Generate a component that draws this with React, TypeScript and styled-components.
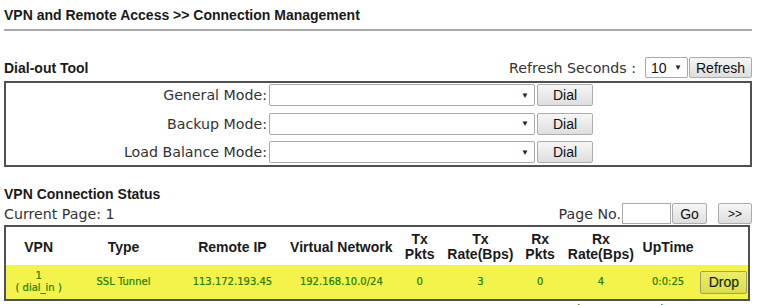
import styled, { createGlobalStyle } from 'styled-components';

const GlobalStyle = createGlobalStyle`
  body {
    margin: 0;
    background: #fff;
    font-family: "DejaVu Sans", Verdana, sans-serif;
    color: #333;
  }
`;

const Page = styled.div`
  width: 748px;
  padding: 7px 0 0 4px;
`;

const PageTitle = styled.div`
  font: bold 14px/16px "Liberation Sans", Arial, sans-serif;
  color: #1a1a1a;
`;

const Rule = styled.div`
  margin-top: 6px;
  border-top: 2px solid #a9a9a9;
`;

const Bar = styled.div<{ $top: number; $h: number }>`
  display: flex;
  align-items: center;
  justify-content: space-between;
  margin-top: ${p => p.$top}px;
  height: ${p => p.$h}px;
`;

const SectionTitle = styled.div<{ $top?: number }>`
  font: bold 14px/16px "Liberation Sans", Arial, sans-serif;
  color: #1a1a1a;
  margin-top: ${p => p.$top ?? 0}px;
`;

const Label = styled.span`
  font-size: 14.2px;
  line-height: 16px;
  color: #333;
`;

const Controls = styled.div<{ $gap: number }>`
  display: flex;
  align-items: center;
  gap: ${p => p.$gap}px;
`;

const SelectBox = styled.div<{ $w: number; $h: number }>`
  width: ${p => p.$w}px;
  height: ${p => p.$h}px;
  box-sizing: border-box;
  border: 1px solid #a9a9a9;
  border-radius: 2px;
  background: #fff;
  display: flex;
  align-items: center;
  justify-content: space-between;
  padding: 0 5px 0 5px;
  font: 14px "Liberation Sans", Arial, sans-serif;
  color: #111;
`;

const Caret = styled.span`
  font-size: 8px;
  color: #222;
`;

const Button = styled.button<{ $w: number; $h: number; $tint?: boolean }>`
  width: ${p => p.$w}px;
  height: ${p => p.$h}px;
  box-sizing: border-box;
  padding: 0;
  margin: 0;
  border: 1px solid ${p => (p.$tint ? '#a0a060' : '#acacac')};
  border-radius: 2px;
  background: ${p =>
    p.$tint
      ? 'linear-gradient(#eeee66, #dcdc50)'
      : 'linear-gradient(#f6f6f6, #dedede)'};
  font: 14px "Liberation Sans", Arial, sans-serif;
  color: #111;
`;

const TextInput = styled.div`
  width: 49px;
  height: 21px;
  box-sizing: border-box;
  border: 1px solid #a9a9a9;
  background: #fff;
`;

const DialBox = styled.div`
  margin-top: 2px;
  border: 2px solid #505050;
  padding: 1px 0 2px 0;
  display: grid;
  grid-template-columns: 261px 266px 56px;
  column-gap: 2px;
  row-gap: 6.5px;
  align-items: center;
`;

const ModeLabel = styled.span`
  text-align: right;
  font-size: 14.2px;
  color: #333;
`;

const StatusTable = styled.table`
  margin-top: 1px;
  width: 746px;
  border-collapse: collapse;
  table-layout: fixed;
  border: 2px solid #505050;
`;

const HeadCell = styled.th`
  height: 36px;
  padding: 2px 0 0;
  font: bold 14px/15px "Liberation Sans", Arial, sans-serif;
  color: #1a1a1a;
  text-align: center;
  vertical-align: middle;
  background: #fff;
`;

const DataRow = styled.tr`
  background: #f3f34c;
`;

const DataCell = styled.td`
  height: 34px;
  padding: 0;
  font-size: 10px;
  line-height: 12px;
  color: #247c00;
  text-align: center;
  vertical-align: middle;
  -webkit-text-stroke: 0.2px #247c00;
`;

const Legend = styled.div`
  margin-top: 1px;
  padding-right: 84px;
  text-align: right;
  font-size: 14px;
  color: #247c00;
`;

const columns = [66, 104, 113, 104, 52, 69, 50, 71, 63, 49];
const headers = [
  ['VPN'],
  ['Type'],
  ['Remote IP'],
  ['Virtual Network'],
  ['Tx', 'Pkts'],
  ['Tx', 'Rate(Bps)'],
  ['Rx', 'Pkts'],
  ['Rx', 'Rate(Bps)'],
  ['UpTime'],
  [''],
];

const modes = ['General Mode:', 'Backup Mode:', 'Load Balance Mode:'];

const connection = {
  vpn: '1',
  name: '( dial_in )',
  type: 'SSL Tunnel',
  remoteIp: '113.172.193.45',
  network: '192.168.10.0/24',
  txPkts: '0',
  txRate: '3',
  rxPkts: '0',
  rxRate: '4',
  upTime: '0:0:25',
};

export default function App() {
  return (
    <>
      <GlobalStyle />
      <Page>
        <PageTitle>VPN and Remote Access &gt;&gt; Connection Management</PageTitle>
        <Rule />

        <Bar $top={25} $h={23}>
          <SectionTitle>Dial-out Tool</SectionTitle>
          <Controls $gap={1}>
            <Label style={{ marginRight: 8 }}>Refresh Seconds :</Label>
            <SelectBox $w={43} $h={21}>
              10<Caret>▼</Caret>
            </SelectBox>
            <Button $w={63} $h={21}>Refresh</Button>
          </Controls>
        </Bar>

        <DialBox>
          {modes.map(m => (
            <>
              <ModeLabel key={m}>{m}</ModeLabel>
              <SelectBox $w={266} $h={22}>
                <span />
                <Caret>▼</Caret>
              </SelectBox>
              <Button $w={56} $h={22}>Dial</Button>
            </>
          ))}
        </DialBox>

        <SectionTitle $top={19}>VPN Connection Status</SectionTitle>
        <Bar $top={1} $h={21}>
          <Label>Current Page: 1</Label>
          <Controls $gap={1}>
            <Label>Page No.</Label>
            <TextInput />
            <Button $w={35} $h={21}>Go</Button>
            <Button $w={34} $h={21} style={{ marginLeft: 10, fontSize: 12 }}>&gt;&gt;</Button>
          </Controls>
        </Bar>

        <StatusTable>
          <colgroup>
            {columns.map((w, i) => (
              <col key={i} style={{ width: w }} />
            ))}
          </colgroup>
          <thead>
            <tr>
              {headers.map((h, i) => (
                <HeadCell key={i}>
                  {h.map((line, j) => (
                    <div key={j}>{line}</div>
                  ))}
                </HeadCell>
              ))}
            </tr>
          </thead>
          <tbody>
            <DataRow>
              <DataCell>
                {connection.vpn}
                <br />
                {connection.name}
              </DataCell>
              <DataCell>{connection.type}</DataCell>
              <DataCell>{connection.remoteIp}</DataCell>
              <DataCell>{connection.network}</DataCell>
              <DataCell>{connection.txPkts}</DataCell>
              <DataCell>{connection.txRate}</DataCell>
              <DataCell>{connection.rxPkts}</DataCell>
              <DataCell>{connection.rxRate}</DataCell>
              <DataCell>{connection.upTime}</DataCell>
              <DataCell>
                <Button $w={47} $h={23} $tint>Drop</Button>
              </DataCell>
            </DataRow>
          </tbody>
        </StatusTable>

        <Legend>xxxxxxxx : Data is encrypted.</Legend>
      </Page>
    </>
  );
}
